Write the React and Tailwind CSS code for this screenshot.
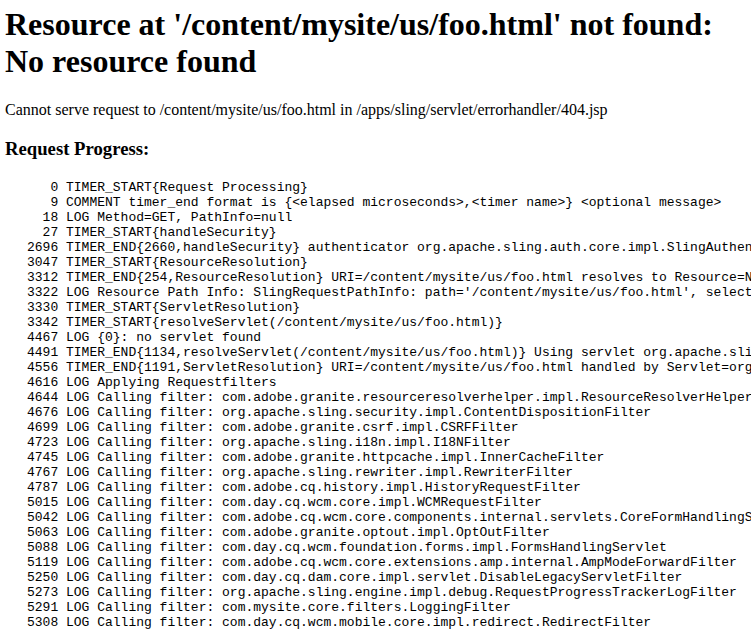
const lines = [
    [0, "TIMER_START{Request Processing}"],
    [9, "COMMENT timer_end format is {<elapsed microseconds>,<timer name>} <optional message>"],
    [18, "LOG Method=GET, PathInfo=null"],
    [27, "TIMER_START{handleSecurity}"],
    [2696, "TIMER_END{2660,handleSecurity} authenticator org.apache.sling.auth.core.impl.SlingAuthenticator@5b7a8c2e returned org.apache.sling.auth.core.spi.AuthenticationInfo"],
    [3047, "TIMER_START{ResourceResolution}"],
    [3312, "TIMER_END{254,ResourceResolution} URI=/content/mysite/us/foo.html resolves to Resource=NonExistingResource, path=/content/mysite/us/foo.html"],
    [3322, "LOG Resource Path Info: SlingRequestPathInfo: path='/content/mysite/us/foo.html', selectorString='null', extension='html', suffix='null'"],
    [3330, "TIMER_START{ServletResolution}"],
    [3342, "TIMER_START{resolveServlet(/content/mysite/us/foo.html)}"],
    [4467, "LOG {0}: no servlet found"],
    [4491, "TIMER_END{1134,resolveServlet(/content/mysite/us/foo.html)} Using servlet org.apache.sling.servlets.get.DefaultGetServlet"],
    [4556, "TIMER_END{1191,ServletResolution} URI=/content/mysite/us/foo.html handled by Servlet=org.apache.sling.servlets.get.DefaultGetServlet"],
    [4616, "LOG Applying Requestfilters"],
    [4644, "LOG Calling filter: com.adobe.granite.resourceresolverhelper.impl.ResourceResolverHelperImpl"],
    [4676, "LOG Calling filter: org.apache.sling.security.impl.ContentDispositionFilter"],
    [4699, "LOG Calling filter: com.adobe.granite.csrf.impl.CSRFFilter"],
    [4723, "LOG Calling filter: org.apache.sling.i18n.impl.I18NFilter"],
    [4745, "LOG Calling filter: com.adobe.granite.httpcache.impl.InnerCacheFilter"],
    [4767, "LOG Calling filter: org.apache.sling.rewriter.impl.RewriterFilter"],
    [4787, "LOG Calling filter: com.adobe.cq.history.impl.HistoryRequestFilter"],
    [5015, "LOG Calling filter: com.day.cq.wcm.core.impl.WCMRequestFilter"],
    [5042, "LOG Calling filter: com.adobe.cq.wcm.core.components.internal.servlets.CoreFormHandlingServlet"],
    [5063, "LOG Calling filter: com.adobe.granite.optout.impl.OptOutFilter"],
    [5088, "LOG Calling filter: com.day.cq.wcm.foundation.forms.impl.FormsHandlingServlet"],
    [5119, "LOG Calling filter: com.adobe.cq.wcm.core.extensions.amp.internal.AmpModeForwardFilter"],
    [5250, "LOG Calling filter: com.day.cq.dam.core.impl.servlet.DisableLegacyServletFilter"],
    [5273, "LOG Calling filter: org.apache.sling.engine.impl.debug.RequestProgressTrackerLogFilter"],
    [5291, "LOG Calling filter: com.mysite.core.filters.LoggingFilter"],
    [5308, "LOG Calling filter: com.day.cq.wcm.mobile.core.impl.redirect.RedirectFilter"],
]

const App = () => {
    const progress = lines
        .map(([time, msg]) => `${String(time).padStart(4, " ")} ${msg}`)
        .join("\n")

    return (
        <div className="h-[632px] w-[751px] overflow-hidden bg-white text-black font-['Liberation_Serif',serif]">
            <div className="pt-[6px] pl-[5px]">
                <h1 className="text-[32px] font-bold leading-[36.8px] mb-[21.44px]">
                    Resource at '/content/mysite/us/foo.html' not found: No resource found
                </h1>
                <p className="text-[16px] leading-[18.4px]">
                    Cannot serve request to /content/mysite/us/foo.html in /apps/sling/servlet/errorhandler/404.jsp
                </p>
                <h3 className="text-[18.72px] font-bold leading-[21.5px] mt-[18.72px]">
                    Request Progress:
                </h3>
                <pre className="mt-[20.5px] pl-[22px] whitespace-pre text-[13px] leading-[15px] font-['Liberation_Mono',monospace]">
                    {progress}
                </pre>
            </div>
        </div>
    )
}

export default App
